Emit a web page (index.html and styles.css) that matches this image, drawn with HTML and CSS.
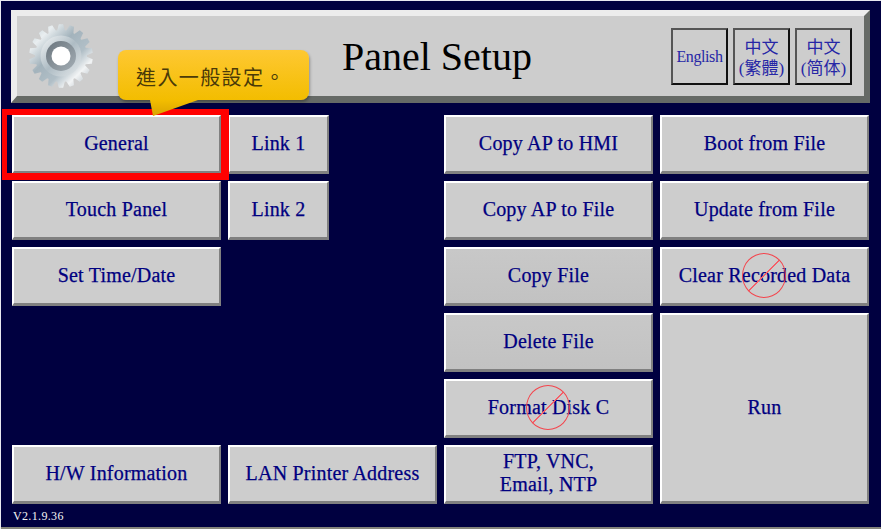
FILE: index.html
```html
<!DOCTYPE HTML>
<html lang="en">
  <head>
    <title>Panel Setup</title>
    <meta charset="utf-8">
    <link rel="stylesheet" href="styles.css">
  </head>
  <body>

  <div id="screen">

    <div id="header">
      <svg class="gear" width="68" height="68" viewBox="0 0 68 68">
        <defs>
          <linearGradient id="steel" x1="0" y1="0" x2="1" y2="1">
            <stop offset="0" stop-color="#b4c4cd"/>
            <stop offset="0.22" stop-color="#e9eef0"/>
            <stop offset="0.42" stop-color="#a3b3bc"/>
            <stop offset="0.62" stop-color="#b1bfc7"/>
            <stop offset="0.76" stop-color="#f2f4f5"/>
            <stop offset="1" stop-color="#8fa0aa"/>
          </linearGradient>
          <linearGradient id="band" x1="0" y1="0" x2="1" y2="1">
            <stop offset="0" stop-color="#f4f6f7"/>
            <stop offset="0.5" stop-color="#aebcc4"/>
            <stop offset="1" stop-color="#e6eaec"/>
          </linearGradient>
          <linearGradient id="ring" x1="0" y1="0" x2="1" y2="1">
            <stop offset="0" stop-color="#6a757d"/>
            <stop offset="1" stop-color="#a4aeb5"/>
          </linearGradient>
          <g id="tooth3">
            <polygon id="tooth" points="30,9 31.8,2.2 36.2,2.2 38,9"/>
            <use href="#tooth" transform="rotate(20 34 34)"/>
            <use href="#tooth" transform="rotate(40 34 34)"/>
          </g>
          <mask id="gearShape">
            <g fill="#ffffff">
              <circle cx="34" cy="34" r="26"/>
              <use href="#tooth3"/>
              <use href="#tooth3" transform="rotate(60 34 34)"/>
              <use href="#tooth3" transform="rotate(120 34 34)"/>
              <use href="#tooth3" transform="rotate(180 34 34)"/>
              <use href="#tooth3" transform="rotate(240 34 34)"/>
              <use href="#tooth3" transform="rotate(300 34 34)"/>
            </g>
          </mask>
        </defs>
        <rect width="68" height="68" fill="url(#steel)" mask="url(#gearShape)"/>
        <circle cx="34" cy="34" r="20.5" fill="url(#band)"/>
        <circle cx="34" cy="34" r="15" fill="url(#ring)"/>
        <circle cx="34" cy="34" r="9.5" fill="#ffffff"/>
      </svg>
      <h1 class="title">Panel Setup</h1>
      <div class="langs">
        <div class="lang lang-en">English</div>
        <div class="lang">中文<br>(繁體)</div>
        <div class="lang" lang="zh-CN">中文<br>(简体)</div>
      </div>
    </div>

    <div id="menu">
      <div class="btn">General</div>
      <div class="btn">Link 1</div>
      <div class="btn col-4">Copy AP to HMI</div>
      <div class="btn">Boot from File</div>

      <div class="btn">Touch Panel</div>
      <div class="btn">Link 2</div>
      <div class="btn col-4">Copy AP to File</div>
      <div class="btn">Update from File</div>

      <div class="btn">Set Time/Date</div>
      <div class="btn col-4 shade">Copy File</div>
      <div class="btn disabled">Clear Recorded Data<span class="no"></span></div>

      <div class="btn col-4 shade">Delete File</div>
      <div class="btn run">Run</div>

      <div class="btn col-4 row-5 disabled">Format Disk C<span class="no"></span></div>

      <div class="btn row-6">H/W Information</div>
      <div class="btn row-6 wide">LAN Printer Address</div>
      <div class="btn col-4 row-6 tight">FTP, VNC,<br>Email, NTP</div>
    </div>

    <div id="version">V2.1.9.36</div>

    <div id="highlight"></div>
    <div id="callout">進入一般設定。</div>
  </div>

  </body>
</html>
```

FILE: styles.css
```css
html, body {
  margin: 0;
  padding: 0;
  height: 100%;
}

body {
  background: #000040;
  overflow: hidden;
}

#screen {
  position: relative;
  width: 881px;
  height: 529px;
  padding-top: 10px;
  box-sizing: border-box;
  font-family: "Liberation Serif", "Noto Sans CJK TC", serif;
  color: #000080;
  box-shadow: inset 1px 1px 0 #e8e8f0, inset 0 -2px 0 #85857c;
}

#header {
  display: flex;
  align-items: center;
  height: 93px;
  margin: 0 11px 0 11px;
  box-sizing: border-box;
  background: #cdcdcd;
  border-style: solid;
  border-width: 6px 6px 7px 6px;
  border-color: #ececec #666a66 #666a66 #ececec;
}

.gear {
  margin-left: 10px;
  flex: none;
}

.title {
  flex: 1;
  margin: 0;
  padding-left: 108px;
  font-size: 40px;
  font-weight: normal;
  color: #000000;
  text-align: center;
}

.langs {
  display: flex;
  gap: 5px;
  margin-right: 12px;
}

.lang {
  display: flex;
  align-items: center;
  justify-content: center;
  width: 57px;
  height: 57px;
  padding-top: 3px;
  box-sizing: border-box;
  border: 2px solid;
  border-color: #555555 #111111 #111111 #555555;
  font-size: 17px;
  line-height: 21px;
  text-align: center;
  color: #2626a6;
}

.lang-en {
  padding-top: 0;
  font-size: 16px;
  letter-spacing: -0.4px;
}

#menu {
  display: grid;
  grid-template-columns: 209px 101px 101px 209px 209px;
  grid-auto-rows: 59px;
  gap: 7px;
  margin: 12px 0 0 12px;
}

.btn {
  position: relative;
  display: flex;
  align-items: center;
  justify-content: center;
  padding-bottom: 2px;
  box-sizing: border-box;
  background: #cdcdcd;
  border-style: solid;
  border-width: 2px 2px 3px 2px;
  border-color: #ffffff #808080 #808080 #ffffff;
  font-size: 20px;
  line-height: 23px;
  letter-spacing: 0.2px;
  -webkit-text-stroke: 0.25px #000080;
  text-align: center;
}

.shade {
  background: linear-gradient(#c8c8c8, #c2c2c2);
}

.col-4 {
  grid-column: 4;
}

.row-5 {
  grid-row: 5;
}

.row-6 {
  grid-row: 6;
}

.wide {
  grid-column: 2 / 4;
}

.run {
  grid-column: 5;
  grid-row: 4 / 7;
}

.no {
  position: absolute;
  left: 50%;
  top: 50%;
  width: 44px;
  height: 45px;
  margin: -23px 0 0 -23px;
  box-sizing: border-box;
  border: 1.5px solid #f4444c;
  border-radius: 50%;
  background: linear-gradient(135deg, transparent 49%, #f4606a 49%, #f4606a 51%, transparent 51%);
}

#version {
  margin: 5px 0 0 13px;
  font-size: 12px;
  line-height: 14px;
  letter-spacing: 0.35px;
  color: #f4f4f4;
}

#highlight {
  position: absolute;
  left: 2px;
  top: 109px;
  width: 227px;
  height: 71px;
  box-sizing: border-box;
  border-style: solid;
  border-color: #ff0000;
  border-width: 6px 8px 7px 5px;
}

#callout {
  position: absolute;
  left: 118px;
  top: 50px;
  width: 191px;
  height: 50px;
  box-sizing: border-box;
  padding-left: 18px;
  border-radius: 8px;
  background: linear-gradient(#fec832, #f3bd00);
  box-shadow: 1px 2px 3px rgba(0, 0, 0, 0.3);
  font-family: "Noto Sans CJK TC", sans-serif;
  font-size: 20px;
  line-height: 54px;
  letter-spacing: 1.4px;
  color: #4a3a08;
}

#callout:after {
  content: "";
  position: absolute;
  left: 32px;
  top: 50px;
  width: 48px;
  height: 16px;
  background: linear-gradient(#f3bd00, #d9a400);
  clip-path: polygon(0 0, 100% 0, 3px 100%);
}
```
